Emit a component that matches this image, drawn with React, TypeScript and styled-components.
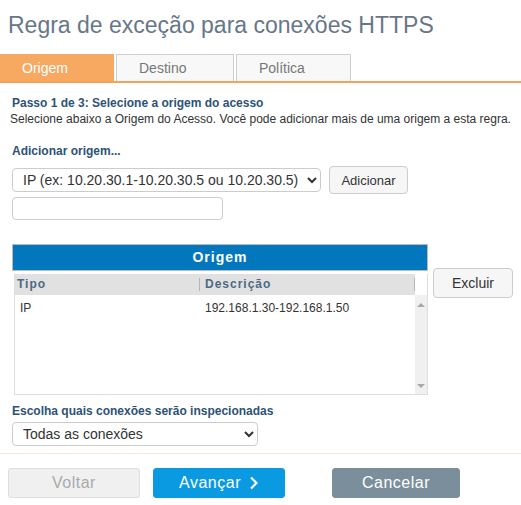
import styled, { createGlobalStyle } from "styled-components";

const GlobalStyle = createGlobalStyle`
  body {
    margin: 0;
    background: #fff;
    font-family: "Liberation Sans", Arial, sans-serif;
  }
`;

const tabs = ["Origem", "Destino", "Política"];

function App() {
  return (
    <Page>
      <GlobalStyle />
      <Title>Regra de exceção para conexões HTTPS</Title>
      <TabBar>
        {tabs.map((t, i) => (
          <Tab key={t} $active={i === 0}>
            {t}
          </Tab>
        ))}
      </TabBar>
      <Content>
        <StepTitle>Passo 1 de 3: Selecione a origem do acesso</StepTitle>
        <StepText>
          Selecione abaixo a Origem do Acesso. Você pode adicionar mais de uma
          origem a esta regra.
        </StepText>
        <Label $top={18}>Adicionar origem...</Label>
        <AddRow>
          <Select $width={309} defaultValue="ip">
            <option value="ip">IP (ex: 10.20.30.1-10.20.30.5 ou 10.20.30.5)</option>
          </Select>
          <Button>Adicionar</Button>
        </AddRow>
        <TextInput />
        <TableRow>
          <Table>
            <TableCaption>Origem</TableCaption>
            <Grid>
              <GridMain>
                <HeadRow>
                  <HeadCell $w={185}>Tipo</HeadCell>
                  <HeadCell $w={215} $indent>
                    Descrição
                  </HeadCell>
                </HeadRow>
                <BodyRow>
                  <Cell $w={185}>IP</Cell>
                  <Cell $w={215}>192.168.1.30-192.168.1.50</Cell>
                </BodyRow>
              </GridMain>
              <Scroll>
                <ScrollCorner />
                <ScrollTrack>
                  <Arrow $up />
                  <Arrow />
                </ScrollTrack>
              </Scroll>
            </Grid>
          </Table>
          <SideButton>Excluir</SideButton>
        </TableRow>
        <Label $top={9}>Escolha quais conexões serão inspecionadas</Label>
        <Select $width={246} $top={4} defaultValue="all">
          <option value="all">Todas as conexões</option>
        </Select>
      </Content>
      <Footer>
        <ActionButton $variant="disabled">Voltar</ActionButton>
        <ActionButton $variant="primary">
          Avançar
          <svg width="10" height="14" viewBox="0 0 10 14">
            <path d="M2 1.5 L7.5 7 L2 12.5" fill="none" stroke="#fff" strokeWidth="2.2" />
          </svg>
        </ActionButton>
        <ActionButton $variant="secondary" $offset={34} $width={128}>
          Cancelar
        </ActionButton>
      </Footer>
    </Page>
  );
}

export default App;

const Page = styled.div`
  width: 521px;
  height: 505px;
  overflow: hidden;
  color: #333;
`;

const Title = styled.h1`
  margin: 0;
  padding: 12px 0 0 8px;
  height: 54px;
  box-sizing: border-box;
  font-size: 23px;
  font-weight: normal;
  color: #677787;
  line-height: 27px;
`;

const TabBar = styled.div`
  display: flex;
  gap: 2px;
  border-bottom: 2px solid #f6a25a;
  height: 27px;
`;

const Tab = styled.div<{ $active?: boolean }>`
  width: 114px;
  box-sizing: border-box;
  padding-left: ${(p) => (p.$active ? "21px" : "22px")};
  font-size: 14px;
  line-height: 26px;
  color: ${(p) => (p.$active ? "#fff" : "#777")};
  background: ${(p) => (p.$active ? "#f7a861" : "#f8f8f8")};
  border: 1px solid ${(p) => (p.$active ? "#f7a861" : "#cfcfcf")};
  border-bottom: none;
  &:nth-child(2) {
    width: 118px;
  }
  &:nth-child(3) {
    width: 115px;
  }
`;

const Content = styled.div`
  padding: 13px 0 0 12px;
`;

const StepTitle = styled.div`
  font-size: 12px;
  font-weight: bold;
  color: #2d5277;
  line-height: 14px;
`;

const StepText = styled.div`
  font-size: 12px;
  color: #333;
  line-height: 14px;
  margin-left: -2px;
  margin-top: 2px;
`;

const Label = styled.div<{ $top: number }>`
  font-size: 12px;
  font-weight: bold;
  color: #2d5277;
  line-height: 14px;
  margin-top: ${(p) => p.$top}px;
`;

const AddRow = styled.div`
  display: flex;
  align-items: center;
  gap: 8px;
  margin-top: 8px;
`;

const Select = styled.select<{ $width: number; $top?: number }>`
  display: block;
  width: ${(p) => p.$width}px;
  margin-top: ${(p) => p.$top ?? 0}px;
  height: 24px;
  box-sizing: border-box;
  border: 1px solid #ccc;
  border-radius: 4px;
  background: #fff;
  font-family: "Liberation Sans", Arial, sans-serif;
  font-size: 14px;
  color: #333;
  padding: 0 4px 0 6px;
`;

const Button = styled.button`
  height: 28px;
  width: 79px;
  box-sizing: border-box;
  border: 1px solid #ccc;
  border-radius: 4px;
  background: #f6f6f6;
  font-family: "Liberation Sans", Arial, sans-serif;
  font-size: 13px;
  color: #333;
  padding: 0;
`;

const TextInput = styled.input`
  display: block;
  width: 211px;
  height: 23px;
  box-sizing: border-box;
  border: 1px solid #ccc;
  border-radius: 4px;
  margin-top: 3px;
`;

const TableRow = styled.div`
  display: flex;
  align-items: flex-start;
  gap: 5px;
  margin-top: 24px;
`;

const Table = styled.div`
  width: 416px;
`;

const TableCaption = styled.div`
  height: 27px;
  box-sizing: border-box;
  background: #0277be;
  border: 1px solid #bbb;
  color: #fff;
  font-size: 14px;
  font-weight: bold;
  letter-spacing: 1px;
  text-align: center;
  line-height: 25px;
`;

const Grid = styled.div`
  display: flex;
  margin: 3px 0 0 2px;
  height: 121px;
  border: 1px solid #ddd;
  border-top: none;
  box-sizing: border-box;
`;

const GridMain = styled.div`
  flex: 1;
`;

const HeadRow = styled.div`
  display: flex;
  align-items: center;
  height: 21px;
  background: #e1e1e1;
`;

const HeadCell = styled.div<{ $w: number; $indent?: boolean }>`
  width: ${(p) => p.$w}px;
  height: 13px;
  box-sizing: border-box;
  padding-left: ${(p) => (p.$indent ? "5px" : "2px")};
  font-size: 12px;
  font-weight: bold;
  letter-spacing: 1px;
  color: #4d6983;
  line-height: 13px;
  border-right: 1px solid #b5b5b5;
`;

const BodyRow = styled.div`
  display: flex;
  padding-top: 6px;
`;

const Cell = styled.div<{ $w: number }>`
  width: ${(p) => p.$w}px;
  box-sizing: border-box;
  padding-left: 5px;
  font-size: 12px;
  color: #333;
  line-height: 14px;
`;

const Scroll = styled.div`
  width: 14px;
  display: flex;
  flex-direction: column;
`;

const ScrollCorner = styled.div`
  height: 21px;
  background: #fff;
`;

const ScrollTrack = styled.div`
  flex: 1;
  background: #f0f0f0;
  display: flex;
  flex-direction: column;
  justify-content: space-between;
  align-items: center;
  padding: 8px 0 6px;
`;

const Arrow = styled.div<{ $up?: boolean }>`
  width: 0;
  height: 0;
  border-left: 4px solid transparent;
  border-right: 4px solid transparent;
  ${(p) =>
    p.$up ? "border-bottom: 4px solid #a8a8a8;" : "border-top: 4px solid #a8a8a8;"}
`;

const SideButton = styled(Button)`
  width: 80px;
  height: 30px;
  margin-top: 24px;
  font-size: 14px;
`;

const Footer = styled.div`
  display: flex;
  align-items: center;
  gap: 13px;
  margin-top: 7px;
  border-top: 1px solid #fde6d2;
  padding: 14px 0 0 8px;
`;

const variants = {
  disabled: "background: #f0f0f0; color: #aaa; border: 1px solid #ddd;",
  primary: "background: #0a9ae2; color: #fff; border: 1px solid #0a9ae2;",
  secondary: "background: #7a8f9b; color: #fff; border: 1px solid #7a8f9b;",
};

const ActionButton = styled.button<{
  $variant: keyof typeof variants;
  $offset?: number;
  $width?: number;
}>`
  width: ${(p) => p.$width ?? 132}px;
  margin-left: ${(p) => p.$offset ?? 0}px;
  height: 30px;
  box-sizing: border-box;
  border-radius: 3px;
  font-family: "Liberation Sans", Arial, sans-serif;
  font-size: 16px;
  letter-spacing: 0.5px;
  display: flex;
  align-items: center;
  justify-content: center;
  gap: 8px;
  padding: 0;
  ${(p) => variants[p.$variant]}
`;
